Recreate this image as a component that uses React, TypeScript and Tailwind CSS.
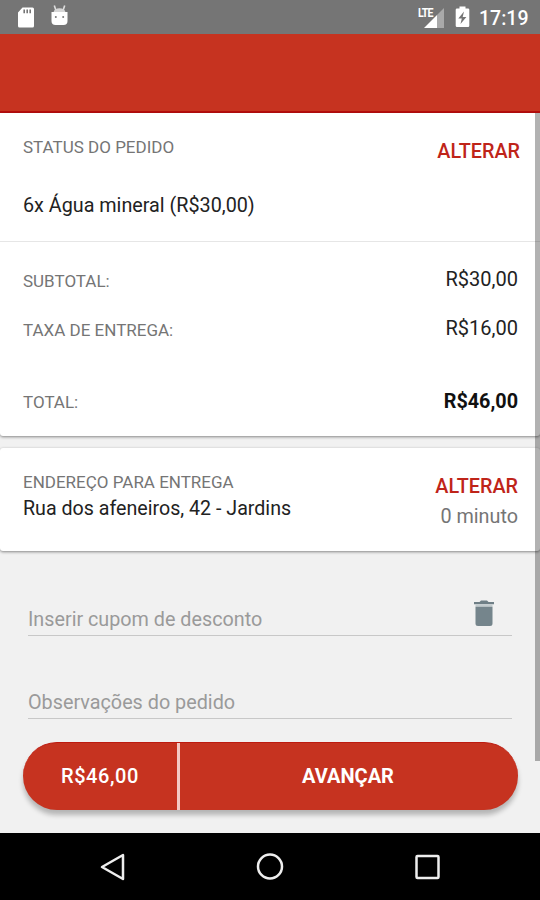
import type { ReactNode } from "react";

function StatusBar() {
  return (
    <header className="flex h-[34px] shrink-0 items-center justify-between bg-[#757575] pr-[11px] pl-[17px] text-white">
      <div className="flex items-center gap-[15px]">
        {/* SD card */}
        <svg width="18" height="21" viewBox="0 0 18 21">
          <path
            fill="#fff"
            fillRule="evenodd"
            d="M5.500 0.500h10a1.500 1.500 0 0 1 1.500 1.500v17a1.500 1.500 0 0 1-1.500 1.500h-13a1.500 1.500 0 0 1-1.500-1.500v-13.500zM6.400 2.500v3.700h1.600v-3.700zM9.400 2.500v3.700h1.600v-3.700zM12.400 2.500v3.700h1.600v-3.700z"
          />
        </svg>
        {/* Android head */}
        <svg className="-mt-[3px]" width="19" height="21" viewBox="0 0 19 21">
          <path d="M4.300 0.500l1.500 4.500M14.700 0.500l-1.500 4.500" stroke="#ddd" strokeWidth="1.600" />
          <path d="M3.500 7.200a6.100 4.800 0 0 1 12 0z" fill="#d6d6d6" />
          <path
            d="M1.500 7h16v9a4 4 0 0 1-4 4h-8a4 4 0 0 1-4-4z"
            fill="#fff"
          />
          <circle cx="5.800" cy="12" r="1" fill="#777" />
          <circle cx="13.200" cy="12" r="1" fill="#777" />
        </svg>
      </div>

      <div className="flex items-center">
        <div className="relative h-[22px] w-[27px]">
          <svg width="27" height="22" viewBox="0 0 27 22">
            <path d="M26 2v20h-7v-13z" fill="#a9a9a9" />
            <path d="M19 9v13h-13z" fill="#fff" />
          </svg>
          <span className="absolute top-0 left-0 origin-left scale-x-85 text-[12.5px] leading-[13px] font-bold tracking-[-0.9px]">
            LTE
          </span>
        </div>
        <svg className="ml-[10px]" width="15" height="22" viewBox="0 0 15 22">
          <path
            fill="#fff"
            fillRule="evenodd"
            d="M4.500 0.500h6v2h2.500a1.300 1.300 0 0 1 1.300 1.300v16a1.300 1.300 0 0 1-1.300 1.300h-11a1.300 1.300 0 0 1-1.300-1.300v-16a1.300 1.300 0 0 1 1.300-1.300h2.500zM9 5.500l-5.700 7h3.500l-1.300 5.500l5.900-7h-3.700z"
          />
        </svg>
        <span className="ml-[9px] w-[50px] pt-1 text-[19.5px] leading-6 font-medium">17:19</span>
      </div>
    </header>
  );
}

function Label({ children }: { children: ReactNode }) {
  return <span className="text-[17px] leading-5 text-[#757575]">{children}</span>;
}

function ChangeButton() {
  return (
    <button className="text-[19.8px] leading-6 font-medium text-[#bf2419]">ALTERAR</button>
  );
}

function OrderCard() {
  return (
    <section className="h-[323px] shrink-0 rounded-b-[3px] bg-white shadow-[0_1px_3px_rgba(0,0,0,0.45)]">
      <div className="flex h-[129px] flex-col border-b border-[#e6e6e6] pt-6 pr-5 pl-[23px]">
        <div className="flex items-start justify-between">
          <Label>STATUS DO PEDIDO</Label>
          <div className="pt-[3px]">
            <ChangeButton />
          </div>
        </div>
        <p className="mt-[29px] text-[19.75px] leading-6 text-[#222]">6x Água mineral (R$30,00)</p>
      </div>

      <div className="flex flex-col pt-[25px] pr-[22px] pl-[23px]">
        <div className="flex h-[49px] items-start justify-between">
          <div className="pt-[3px]"><Label>SUBTOTAL:</Label></div>
          <span className="text-[20px] leading-6 text-[#222]">R$30,00</span>
        </div>
        <div className="flex h-[73px] items-start justify-between">
          <div className="pt-[3px]"><Label>TAXA DE ENTREGA:</Label></div>
          <span className="text-[20px] leading-6 text-[#222]">R$16,00</span>
        </div>
        <div className="flex items-start justify-between">
          <div className="pt-[2px]"><Label>TOTAL:</Label></div>
          <span className="pt-px text-[19.8px] leading-6 font-bold text-[#111]">R$46,00</span>
        </div>
      </div>
    </section>
  );
}

function AddressCard() {
  return (
    <section className="mt-3 flex h-[103px] shrink-0 items-start justify-between rounded-[3px] bg-white pr-[22px] pl-[23px] shadow-[0_1px_3px_rgba(0,0,0,0.45)]">
      <div className="flex flex-col pt-[24px]">
        <Label>ENDEREÇO PARA ENTREGA</Label>
        <span className="mt-[5px] text-[19.65px] leading-6 text-[#222]">
          Rua dos afeneiros, 42 - Jardins
        </span>
      </div>
      <div className="flex flex-col items-end pt-[27px]">
        <ChangeButton />
        <span className="mt-[6px] text-[19.8px] leading-6 text-[#757575]">0 minuto</span>
      </div>
    </section>
  );
}

function TrashIcon() {
  return (
    <svg width="22" height="28" viewBox="0 0 22 28">
      <path d="M1 2h5.500l1.500-1.500h6l1.500 1.500h5.500v2.300h-20z" fill="#6f7f86" />
      <path d="M2.500 4.300h17v2.500h-17z" fill="#c3cccf" />
      <path d="M2.500 6.800h17v16.700a2.500 2.500 0 0 1-2.500 2.500h-12a2.500 2.500 0 0 1-2.500-2.500z" fill="#75858c" />
    </svg>
  );
}

function Checkout() {
  return (
    <div className="mt-[30px] flex flex-col pr-[22px] pl-[23px]">
      <div className="mr-[6px] ml-[5px] flex h-[55px] items-end justify-between border-b-[1.5px] border-[#c8c8c8]">
        <span className="pb-[3px] text-[19.75px] leading-6 text-[#9a9a9a]">Inserir cupom de desconto</span>
        <button className="mr-[17px] pb-[7px]">
          <TrashIcon />
        </button>
      </div>
      <div className="mr-[6px] ml-[5px] flex h-[83px] items-end border-b-[1.5px] border-[#c8c8c8]">
        <span className="pb-[3px] text-[19.8px] leading-6 text-[#9a9a9a]">Observações do pedido</span>
      </div>

      <div className="mt-[23px] flex h-[68px] overflow-hidden rounded-full border-t border-[#bd1b10] bg-[#c63320] text-white shadow-[0_5px_5px_rgba(0,0,0,0.25)]">
        <div className="flex w-[157px] items-center justify-center border-r-[3px] border-[#f3c9c4] pb-[2px] text-[20px] font-medium tracking-[0.6px]">
          R$46,00
        </div>
        <button className="flex-1 pr-[2px] pb-[2px] text-[20px] font-bold">AVANÇAR</button>
      </div>
    </div>
  );
}

function NavigationBar() {
  return (
    <nav className="flex h-[67px] shrink-0 items-center justify-between bg-black pr-[99px] pl-[99px]">
      <svg width="28" height="28" viewBox="0 0 28 28" fill="none" stroke="#eee" strokeWidth="2.500">
        <path d="M24 2v24l-21-12z" strokeLinejoin="round" />
      </svg>
      <svg width="28" height="28" viewBox="0 0 28 28" fill="none" stroke="#eee" strokeWidth="2.500">
        <circle cx="14" cy="13.500" r="12" />
      </svg>
      <svg width="28" height="28" viewBox="0 0 28 28" fill="none" stroke="#eee" strokeWidth="2.500">
        <rect x="3.500" y="3" width="22" height="22" rx="1" />
      </svg>
    </nav>
  );
}

export default function App() {
  return (
    <div className="flex h-[900px] w-[540px] flex-col overflow-hidden bg-[#f1f1f1] font-['Roboto',sans-serif]">
      <StatusBar />
      <div className="h-[79px] shrink-0 border-b-2 border-[#b80d0d] bg-[#c63320]" />
      <main className="relative flex flex-1 flex-col">
        <OrderCard />
        <AddressCard />
        <Checkout />
        {/* Scroll thumb */}
        <div className="absolute top-0 right-0 h-[648px] w-[5px] bg-black/30" />
      </main>
      <NavigationBar />
    </div>
  );
}
